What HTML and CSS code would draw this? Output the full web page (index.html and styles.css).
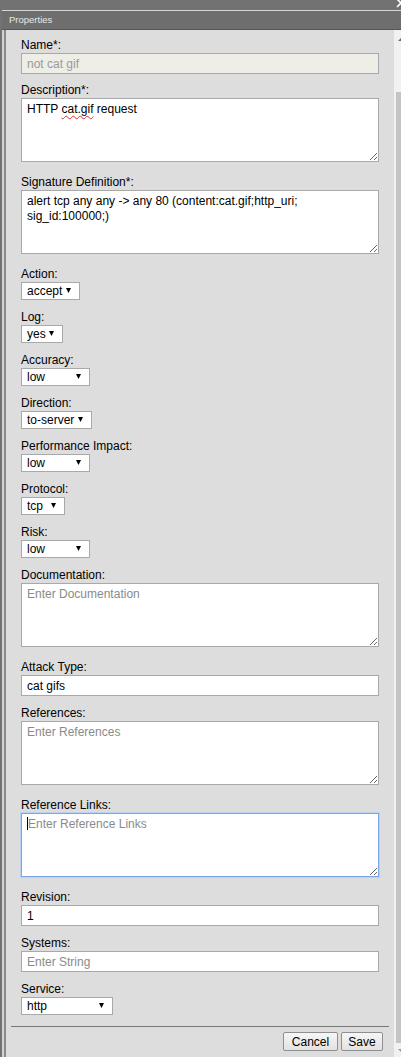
FILE: index.html
```html
<!DOCTYPE html>
<html lang="en">
<head>
<meta charset="utf-8">
<title>Properties</title>
<link rel="stylesheet" href="styles.css">
</head>
<body>
<div class="window">
  <div class="topbar">
    <svg class="close" width="10" height="10" viewBox="0 0 10 10" aria-hidden="true">
      <path d="M1 1 L9 9 M9 1 L1 9" stroke="#ffffff" stroke-width="1.6" fill="none"/>
    </svg>
  </div>
  <div class="titlebar">Properties</div>
  <div class="frame">
    <div class="pane">
      <div class="content">
        <form class="form">
          <div class="field field-name">
            <label class="label">Name*:</label>
            <input class="input" type="text" value="not cat gif" disabled>
          </div>
          <div class="field field-area">
            <label class="label">Description*:</label>
            <div class="textarea">HTTP <span class="misspelled">cat.gif</span> request</div>
          </div>
          <div class="field field-area">
            <label class="label">Signature Definition*:</label>
            <div class="textarea">alert tcp any any -&gt; any 80 (content:cat.gif;http_uri;<br>sig_id:100000;)</div>
          </div>
          <div class="field field-select">
            <label class="label">Action:</label>
            <div class="select sel-action"><span>accept</span><svg class="arrow" width="5" height="5" viewBox="0 0 5 5"><polygon points="0,0 5,0 2.5,5" fill="#000"/></svg></div>
          </div>
          <div class="field field-select">
            <label class="label">Log:</label>
            <div class="select sel-log"><span>yes</span><svg class="arrow" width="5" height="5" viewBox="0 0 5 5"><polygon points="0,0 5,0 2.5,5" fill="#000"/></svg></div>
          </div>
          <div class="field field-select">
            <label class="label">Accuracy:</label>
            <div class="select sel-level"><span>low</span><svg class="arrow" width="5" height="5" viewBox="0 0 5 5"><polygon points="0,0 5,0 2.5,5" fill="#000"/></svg></div>
          </div>
          <div class="field field-select">
            <label class="label">Direction:</label>
            <div class="select sel-direction"><span>to-server</span><svg class="arrow" width="5" height="5" viewBox="0 0 5 5"><polygon points="0,0 5,0 2.5,5" fill="#000"/></svg></div>
          </div>
          <div class="field field-select">
            <label class="label">Performance Impact:</label>
            <div class="select sel-level"><span>low</span><svg class="arrow" width="5" height="5" viewBox="0 0 5 5"><polygon points="0,0 5,0 2.5,5" fill="#000"/></svg></div>
          </div>
          <div class="field field-select">
            <label class="label">Protocol:</label>
            <div class="select sel-protocol"><span>tcp</span><svg class="arrow" width="5" height="5" viewBox="0 0 5 5"><polygon points="0,0 5,0 2.5,5" fill="#000"/></svg></div>
          </div>
          <div class="field field-select">
            <label class="label">Risk:</label>
            <div class="select sel-level"><span>low</span><svg class="arrow" width="5" height="5" viewBox="0 0 5 5"><polygon points="0,0 5,0 2.5,5" fill="#000"/></svg></div>
          </div>
          <div class="field field-area">
            <label class="label">Documentation:</label>
            <div class="textarea"><span class="placeholder">Enter Documentation</span></div>
          </div>
          <div class="field field-input">
            <label class="label">Attack Type:</label>
            <input class="input" type="text" value="cat gifs">
          </div>
          <div class="field field-area">
            <label class="label">References:</label>
            <div class="textarea"><span class="placeholder">Enter References</span></div>
          </div>
          <div class="field field-area">
            <label class="label">Reference Links:</label>
            <div class="textarea focused"><span class="caret"></span><span class="placeholder">Enter Reference Links</span></div>
          </div>
          <div class="field field-input">
            <label class="label">Revision:</label>
            <input class="input" type="text" value="1">
          </div>
          <div class="field field-input">
            <label class="label">Systems:</label>
            <input class="input" type="text" placeholder="Enter String">
          </div>
          <div class="field field-last">
            <label class="label">Service:</label>
            <div class="select sel-service"><span>http</span><svg class="arrow" width="5" height="5" viewBox="0 0 5 5"><polygon points="0,0 5,0 2.5,5" fill="#000"/></svg></div>
          </div>
        </form>
        <div class="footer">
          <button class="btn btn-cancel" type="button">Cancel</button>
          <button class="btn btn-save" type="button">Save</button>
        </div>
      </div>
      <div class="scrollbar">
        <div class="sb-top"><span class="sb-arrow-up"></span></div>
        <div class="sb-thumb"></div>
        <div class="sb-bottom"><span class="sb-arrow-down"></span></div>
      </div>
    </div>
  </div>
</div>
</body>
</html>
```

FILE: styles.css
```css
html, body {
  margin: 0;
  padding: 0;
}

body {
  width: 401px;
  height: 1057px;
  overflow: hidden;
  background: #727272;
  font-family: "Liberation Sans", Arial, sans-serif;
}

.window {
  display: flex;
  flex-direction: column;
  height: 1057px;
  background: #727272;
}

.topbar {
  height: 10px;
  display: flex;
  justify-content: flex-end;
  align-items: flex-start;
  overflow: hidden;
}

.close {
  margin-top: -2px;
  margin-right: -5px;
  flex: none;
}

.titlebar {
  margin-left: 2px;
  border-top: 1px solid #d6d6d6;
  border-bottom: 1px solid #555555;
  height: 18px;
  line-height: 18px;
  padding-left: 7px;
  background: #6e6e6e;
  color: #e8e8e8;
  font-size: 9.5px;
}

.frame {
  flex: 1;
  margin-left: 2px;
  border-left: 2px solid #d2d2d2;
  display: flex;
  min-height: 0;
}

.pane {
  flex: 1;
  display: flex;
  border-left: 2px solid #8a8a8a;
  background: #dddddd;
  min-height: 0;
}

.content {
  flex: 1;
  min-width: 0;
}

.form {
  padding: 8px 15px 0 15px;
}

.field {
  display: flex;
  flex-direction: column;
  align-items: flex-start;
}

.field-name { margin-bottom: 9px; }
.field-area { margin-bottom: 13px; }
.field-select { margin-bottom: 10px; }
.field-input { margin-bottom: 10px; }
.field-last { margin-bottom: 0; }

.label {
  display: block;
  font-size: 12px;
  line-height: 15px;
  height: 15px;
  color: #000;
}

.input {
  box-sizing: border-box;
  width: 100%;
  height: 21px;
  margin: 0;
  border: 1px solid #a9a9a9;
  border-radius: 0;
  padding: 0 5px;
  background: #ffffff;
  font-family: "Liberation Sans", Arial, sans-serif;
  font-size: 12px;
  color: #000;
  outline: none;
}

.input:disabled {
  background: #eeeee7;
  color: #9a9a9a;
}

.input::placeholder {
  color: #8a8a8a;
}

.textarea {
  box-sizing: border-box;
  width: 100%;
  height: 64px;
  border: 1px solid #a9a9a9;
  background: #ffffff;
  padding: 3px 5px;
  font-size: 12px;
  line-height: 15px;
  color: #000;
  resize: both;
  overflow: hidden;
}

.textarea.focused {
  border-color: #7aa6ec;
  box-shadow: 0 0 0 1px #b9d2f6;
}

.placeholder {
  color: #8a8a8a;
}

.caret {
  display: inline-block;
  width: 1px;
  height: 13px;
  background: #000;
  vertical-align: -2px;
}

.misspelled {
  text-decoration: underline wavy #e0302a;
  text-decoration-thickness: 1px;
  text-underline-offset: 2px;
}

.select {
  box-sizing: border-box;
  height: 18px;
  border: 1px solid #a9a9a9;
  background: #ffffff;
  display: flex;
  align-items: center;
  justify-content: space-between;
  padding: 0 8px 0 5px;
  font-size: 12px;
  line-height: 16px;
  color: #000;
}

.select .arrow {
  flex: none;
  margin-top: -2px;
}

.sel-action { width: 59px; }
.sel-log { width: 42px; }
.sel-level { width: 69px; }
.sel-direction { width: 71px; }
.sel-protocol { width: 44px; }
.sel-service { width: 92px; }

.footer {
  margin: 11px 5px 0 5px;
  border-top: 1px solid #767676;
  padding: 5px 6px 0 0;
  display: flex;
  justify-content: flex-end;
  gap: 3px;
}

.btn {
  box-sizing: border-box;
  height: 19px;
  padding: 0;
  margin: 0;
  border: 1px solid #8f8f8f;
  border-radius: 2px;
  background: linear-gradient(#f6f6f6, #e2e2e2);
  font-family: "Liberation Sans", Arial, sans-serif;
  font-size: 12px;
  line-height: 16px;
  color: #000;
  text-align: center;
}

.btn-cancel { width: 55px; }
.btn-save { width: 42px; }

.scrollbar {
  width: 7px;
  flex: none;
  background: #f1f1f1;
  display: flex;
  flex-direction: column;
  overflow: hidden;
}

.sb-top {
  height: 62px;
  flex: none;
  position: relative;
}

.sb-thumb {
  flex: 1;
  margin-left: 2px;
  background: #c4c4c4;
}

.sb-bottom {
  height: 14px;
  flex: none;
  position: relative;
}

.sb-arrow-up {
  position: absolute;
  left: 4px;
  top: 8px;
  width: 0;
  height: 0;
  border-left: 3px solid transparent;
  border-right: 3px solid transparent;
  border-bottom: 3px solid #6a6a6a;
}

.sb-arrow-down {
  position: absolute;
  left: 4px;
  top: 6px;
  width: 0;
  height: 0;
  border-left: 3px solid transparent;
  border-right: 3px solid transparent;
  border-top: 3px solid #9a9a9a;
}
```
